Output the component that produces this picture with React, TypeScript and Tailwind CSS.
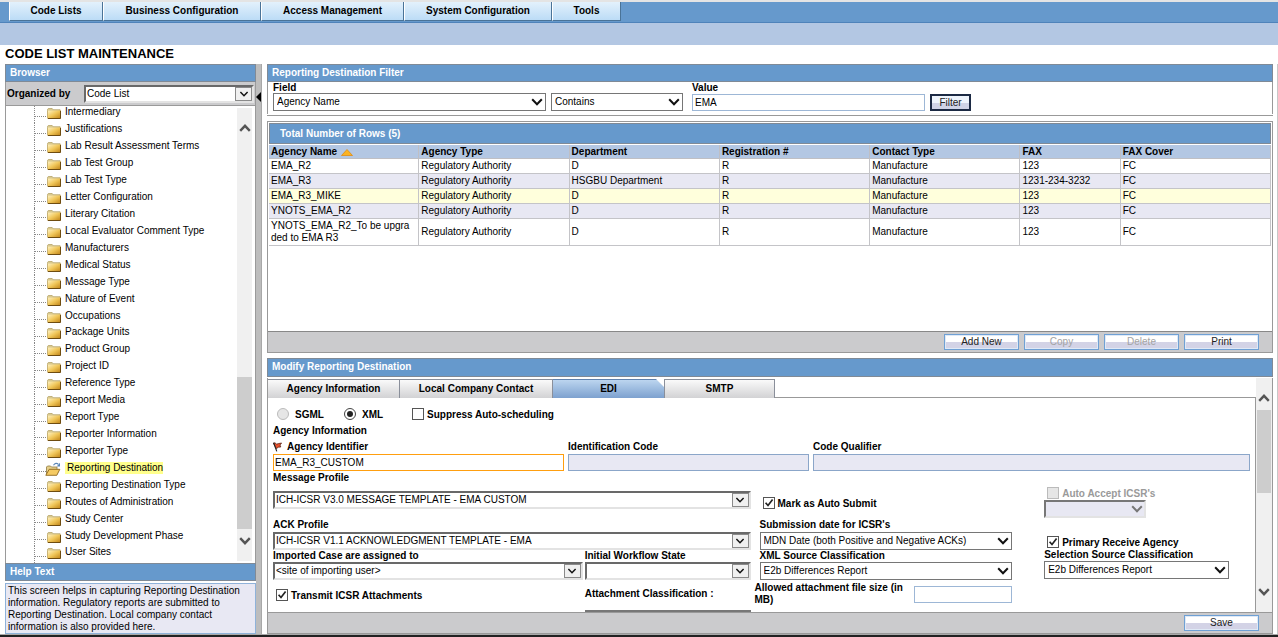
import React from 'react';
import clsx from 'clsx';

const menuItems = [
  { label: 'Code Lists', width: 'w-[94px]' },
  { label: 'Business Configuration', width: 'w-[158px]' },
  { label: 'Access Management', width: 'w-[143px]' },
  { label: 'System Configuration', width: 'w-[148px]' },
  { label: 'Tools', width: 'w-[69px]' },
];

const codeLists = [
  'Intermediary',
  'Justifications',
  'Lab Result Assessment Terms',
  'Lab Test Group',
  'Lab Test Type',
  'Letter Configuration',
  'Literary Citation',
  'Local Evaluator Comment Type',
  'Manufacturers',
  'Medical Status',
  'Message Type',
  'Nature of Event',
  'Occupations',
  'Package Units',
  'Product Group',
  'Project ID',
  'Reference Type',
  'Report Media',
  'Report Type',
  'Reporter Information',
  'Reporter Type',
  'Reporting Destination',
  'Reporting Destination Type',
  'Routes of Administration',
  'Study Center',
  'Study Development Phase',
  'User Sites',
];

const columns = [
  { label: 'Agency Name', width: 'w-[15%]' },
  { label: 'Agency Type', width: 'w-[15%]' },
  { label: 'Department', width: 'w-[15%]' },
  { label: 'Registration #', width: 'w-[15%]' },
  { label: 'Contact Type', width: 'w-[15%]' },
  { label: 'FAX', width: 'w-[10%]' },
  { label: 'FAX Cover', width: 'w-[15%]' },
];

const rows = [
  { tone: 'bg-white h-[15px]', cells: ['EMA_R2', 'Regulatory Authority', 'D', 'R', 'Manufacture', '123', 'FC'] },
  { tone: 'bg-[#e8e8f3] h-[15px]', cells: ['EMA_R3', 'Regulatory Authority', 'HSGBU Department', 'R', 'Manufacture', '1231-234-3232', 'FC'] },
  { tone: 'bg-[#ffffdc] h-[15px]', cells: ['EMA_R3_MIKE', 'Regulatory Authority', 'D', 'R', 'Manufacture', '123', 'FC'] },
  { tone: 'bg-[#e8e8f3] h-[15px]', cells: ['YNOTS_EMA_R2', 'Regulatory Authority', 'D', 'R', 'Manufacture', '123', 'FC'] },
  { tone: 'bg-white h-[27px]', cells: ['YNOTS_EMA_R2_To be upgra\nded to EMA R3', 'Regulatory Authority', 'D', 'R', 'Manufacture', '123', 'FC'] },
];

function Chevron({ className = '', up = false, bold = false }: { className?: string; up?: boolean; bold?: boolean }) {
  return (
    <svg viewBox="0 0 12 8" className={clsx('h-2 w-3 shrink-0', className)} fill="none" stroke="currentColor" strokeWidth={bold ? 2.4 : 2}>
      <path d={up ? 'M1.2 6.8 6 1.8l4.8 5' : 'M1.2 1.2 6 6.2l4.8-5'} />
    </svg>
  );
}

function FolderIcon() {
  return (
    <svg viewBox="0 0 14 11" className="h-[11px] w-[14px] shrink-0">
      <defs>
        <linearGradient id="folder" x1="0" y1="0" x2="1" y2="1">
          <stop offset="0" stopColor="#fff3c4" />
          <stop offset="0.5" stopColor="#f0c659" />
          <stop offset="1" stopColor="#c08316" />
        </linearGradient>
      </defs>
      <path d="M.5 9.5V1.3L1.3.5h3.9l1 1.2h6.9v1.6H.5" fill="#d9c98f" stroke="#a8924f" strokeWidth=".6" />
      <path d="M.5 2.4h13v8.1H.9L.5 10z" fill="url(#folder)" />
      <path d="M.5 2.8v7.3" stroke="#b99f5c" strokeWidth=".6" />
      <path d="M.8 10.5h12.7V2.8" fill="none" stroke="#6e4c10" strokeWidth="1" />
    </svg>
  );
}

function OpenFolderIcon() {
  return (
    <svg viewBox="0 0 16 14" className="-ml-px h-[14px] w-4 shrink-0">
      <path d="M1.5 12.5V5l1-1h3l1 1h5.5v3" fill="#e6cf88" stroke="#8f7a42" strokeWidth=".8" />
      <path d="M.8 13.3 4.2 7.3h10.6l-3 6z" fill="#f5ca62" stroke="#8d661d" strokeWidth=".9" />
      <path d="M8.5 3.2C9.8 1 12 .8 13.4 2.4" fill="none" stroke="#5b87b8" strokeWidth="1.1" />
      <path d="M15 .8v3.6h-3.3z" fill="#5b87b8" />
    </svg>
  );
}

function FlagIcon() {
  return (
    <svg viewBox="0 0 9 10" className="h-[10px] w-[9px] shrink-0">
      <path d="M.4 1.2 2.2.8l1.2 1.4 2-.6L8.6 1 7 3l.8 2-2.4.2-2 1.4z" fill="#e8502c" stroke="#4a1a10" strokeWidth=".7" />
      <path d="M.6.8 3.8 9.4" stroke="#222" strokeWidth="1.1" />
    </svg>
  );
}

type SelectProps = {
  label: string;
  value: string;
  variant?: 'flat' | 'combo' | 'disabled';
  id?: string;
  className?: string;
};

function SelectBox({ label, value, variant = 'flat', id, className }: SelectProps) {
  const combo = variant === 'combo';
  const disabled = variant === 'disabled';
  return (
    <div className={clsx('relative h-[18px] min-w-0', className)}>
      <select
        id={id}
        aria-label={id ? undefined : label}
        disabled={disabled}
        className={clsx(
          'block h-full w-full appearance-none text-[10px] leading-3 text-black',
          !combo && !disabled && 'border border-[#767676] bg-white pl-[3px]',
          combo && 'border-2 border-t-[#696969] border-r-[#e3e3e3] border-b-[#e3e3e3] border-l-[#696969] bg-white pl-px',
          disabled && 'border-2 border-t-[#777] border-r-[#e3e3e3] border-b-[#e3e3e3] border-l-[#777] bg-[#e8e8f3]',
        )}
      >
        <option>{value}</option>
      </select>
      <span
        className={clsx(
          'pointer-events-none absolute flex items-center justify-center',
          combo && 'inset-y-[2px] right-[2px] w-[17px] border border-[#8a8a8a] bg-[#f0f0f0]',
          !combo && 'inset-y-0 right-[3px] w-3',
          disabled ? 'text-[#777]' : 'text-[#111]',
        )}
      >
        <Chevron className={combo ? 'scale-75' : ''} />
      </span>
    </div>
  );
}

function Check({ label, checked, disabled }: { label: string; checked?: boolean; disabled?: boolean }) {
  return (
    <label className={clsx('flex items-center gap-[3px] font-bold', disabled && 'text-[#9a9a9a]')}>
      <span className="relative block size-3 shrink-0">
        <input
          type="checkbox"
          defaultChecked={checked}
          disabled={disabled}
          className={clsx('peer block size-3 appearance-none border', disabled ? 'border-[#bbb] bg-[#e6e6e6]' : 'border-[#555] bg-white')}
        />
        <svg viewBox="0 0 12 12" className="pointer-events-none absolute inset-0 hidden peer-checked:block" fill="none" stroke="#222" strokeWidth="1.7">
          <path d="m2.6 5.8 2.4 2.7L9.6 2.6" />
        </svg>
      </span>
      <span className="pt-[3px]">{label}</span>
    </label>
  );
}

function Radio({ label, checked, disabled }: { label: string; checked?: boolean; disabled?: boolean }) {
  return (
    <label className="flex items-center gap-[6px] font-bold">
      <span className="relative block size-3 shrink-0">
        <input
          type="radio"
          name="format"
          defaultChecked={checked}
          disabled={disabled}
          className={clsx('peer block size-3 appearance-none rounded-full border', disabled ? 'border-[#bbb] bg-[#e6e6e6]' : 'border-[#444] bg-white')}
        />
        <span className="pointer-events-none absolute inset-[3px] hidden rounded-full bg-[#222] peer-checked:block" />
      </span>
      <span className="pt-[3px]">{label}</span>
    </label>
  );
}

function ActionButton({ children, disabled }: { children: React.ReactNode; disabled?: boolean }) {
  return (
    <button
      type="button"
      disabled={disabled}
      className="h-4 w-[75px] border border-[#6fa0d4] bg-linear-to-b from-white from-50% to-[#d3d3e6] to-50% text-[10px] leading-3 text-[#222] shadow-[inset_0_0_0_1px_#dfe9f6] disabled:text-[#a3a3a3]"
    >
      {children}
    </button>
  );
}

function PanelHeader({ children, className }: { children: React.ReactNode; className?: string }) {
  return (
    <h2 className={clsx('flex h-[18px] shrink-0 items-center border border-[#808a96] bg-[#6699cc] px-1 pb-px font-bold text-white', className)}>
      {children}
    </h2>
  );
}

function Browser() {
  return (
    <aside className="flex w-[251px] shrink-0 flex-col">
      <PanelHeader>Browser</PanelHeader>
      <div className="flex h-6 shrink-0 items-center border-x border-b border-[#9a9a9a] bg-[#cbcbcd] px-px">
        <label htmlFor="organized" className="w-[77px] shrink-0 font-bold">Organized by</label>
        <SelectBox id="organized" label="Organized by" value="Code List" variant="combo" className="flex-1" />
      </div>
      <div className="flex min-h-0 flex-1 border-x border-[#9a9a9a] bg-white pr-[3px] pl-7">
        <ul className="flex min-h-0 flex-1 flex-col">
          {codeLists.map((name) => {
            const active = name === 'Reporting Destination';
            return (
              <li key={name} className="flex min-h-0 flex-1 items-center border-l border-dotted border-[#888] pb-1">
                <span className="mt-2 w-[11px] shrink-0 border-b border-dotted border-[#888]" />
                <a href="#" className="flex items-center gap-1 whitespace-nowrap">
                  <span className="flex w-[15px] justify-end pt-[3px]">{active ? <OpenFolderIcon /> : <FolderIcon />}</span>
                  <span className={clsx(active && 'bg-[#ffff8c] pl-[2px]')}>{name}</span>
                </a>
              </li>
            );
          })}
        </ul>
        <div className="my-[2px] flex w-[15px] flex-col items-center bg-[#f0f0f0] text-[#555]">
          <div className="flex h-8 shrink-0 items-end pb-2"><Chevron up bold /></div>
          <div className="flex-[236]" />
          <div className="w-full flex-[152] bg-[#cdcdcd]" />
          <div className="flex h-8 shrink-0 items-start pt-2"><Chevron bold /></div>
        </div>
      </div>
      <PanelHeader>Help Text</PanelHeader>
      <div className="mt-[2px] border border-[#8fb2d9] bg-[#e8e8f3] px-[2px] pt-px leading-3">
        This screen helps in capturing Reporting Destination information. Regulatory reports are submitted to
        Reporting Destination. Local company contact information is also provided here.
      </div>
    </aside>
  );
}

function FilterPanel() {
  return (
    <section className="shrink-0 border-b border-[#999] pb-px">
      <PanelHeader>Reporting Destination Filter</PanelHeader>
      <div className="flex h-8 items-end gap-[5px] border-x border-[#999] px-[5px] pb-[3px] leading-3">
        <div className="w-[273px]">
          <label htmlFor="field" className="block h-[11px] font-bold">Field</label>
          <SelectBox id="field" label="Field" value="Agency Name" />
        </div>
        <SelectBox label="Operator" value="Contains" className="w-[132px]" />
        <div className="ml-1 w-[233px]">
          <label htmlFor="value" className="block h-[12px] font-bold">Value</label>
          <input id="value" defaultValue="EMA" className="block h-[17px] w-full border border-[#9db7d6] bg-white px-[2px] text-[10px]" />
        </div>
        <button type="button" className="h-[17px] w-[41px] border-2 border-[#1c2a44] bg-linear-to-b from-[#eef4fc] from-50% to-[#cfd3e6] to-50% text-[10px] leading-3 text-[#222]">
          Filter
        </button>
      </div>
    </section>
  );
}

function ResultsPanel() {
  return (
    <section className="flex min-h-0 flex-[231] flex-col border border-[#999] bg-white">
      <div className="min-h-0 flex-1 px-px pt-px">
        <h2 className="mb-px flex h-[21px] items-center border border-[#808a96] bg-[#6699cc] px-[10px] font-bold text-white">
          Total Number of Rows (5)
        </h2>
        <table className="w-full table-fixed border-separate border-spacing-0 leading-3">
          <thead>
            <tr className="h-[14px] bg-[#b3c7e3] text-left">
              {columns.map((column, index) => (
                <th key={column.label} className={clsx('h-[14px] border-r border-b border-[#bfbfc4] py-0 pl-[2px] font-bold', column.width)}>
                  {column.label}
                  {index === 0 && (
                    <svg viewBox="0 0 12 7" className="ml-1 inline-block h-[7px] w-3 align-[-1px]">
                      <path d="M6 .5 11.5 6.5H.5z" fill="#fbb322" stroke="#e08b12" strokeWidth=".8" />
                    </svg>
                  )}
                </th>
              ))}
            </tr>
          </thead>
          <tbody>
            {rows.map((row) => (
              <tr key={row.cells[0]} className={row.tone}>
                {row.cells.map((cell, index) => (
                  <td key={index} className="overflow-hidden border-r border-b border-[#c4c4c8] py-0 pl-[2px] whitespace-pre">{cell}</td>
                ))}
              </tr>
            ))}
          </tbody>
        </table>
      </div>
      <div className="flex h-[21px] shrink-0 items-center justify-end gap-[5px] border-t border-[#888] bg-[#cbcbcd] pr-[13px]">
        <ActionButton>Add New</ActionButton>
        <ActionButton disabled>Copy</ActionButton>
        <ActionButton disabled>Delete</ActionButton>
        <ActionButton>Print</ActionButton>
      </div>
    </section>
  );
}

function Tabs() {
  const base = 'h-[19px] border-t border-r border-[#8a8f9a] pb-px font-bold';
  const plain = 'bg-linear-to-b from-[#fafafa] to-[#d2d2d4]';
  return (
    <div role="tablist" className="flex h-5 shrink-0 border-b border-[#999] pt-px">
      <button type="button" role="tab" className={clsx(base, plain, 'w-[132px]')}>Agency Information</button>
      <button type="button" role="tab" className={clsx(base, plain, 'w-[153px]')}>Local Company Contact</button>
      <button
        type="button"
        role="tab"
        aria-selected="true"
        className="h-[19px] w-[111px] border-t border-[#5f81ad] bg-linear-to-b from-[#bcd5ef] to-[#7da1cf] pb-px font-bold [clip-path:polygon(0_0,103px_0,111px_8px,111px_19px,0_19px)]"
      >
        EDI
      </button>
      <button type="button" role="tab" className={clsx(base, plain, 'w-[111px] border-l')}>SMTP</button>
    </div>
  );
}

const disabledInput = 'block h-[17px] w-full border border-[#8ba6c9] bg-[#e8e8f3] px-[2px] text-[10px]';

function EdiForm() {
  return (
    <form className="min-h-0 flex-1 overflow-hidden border-r border-[#999] px-[5px] pt-2 leading-3">
      <div className="flex h-[15px] items-center pl-1">
        <div className="w-[67px]"><Radio label="SGML" disabled /></div>
        <div className="w-[68px]"><Radio label="XML" checked /></div>
        <Check label="Suppress Auto-scheduling" />
      </div>
      <h3 className="mt-1 font-bold">Agency Information</h3>
      <div className="mt-1 grid grid-cols-[291fr_241fr_437fr] gap-x-1">
        <div>
          <label htmlFor="identifier" className="flex items-center gap-[5px] font-bold"><FlagIcon />Agency Identifier</label>
          <input id="identifier" defaultValue="EMA_R3_CUSTOM" className="mt-px block h-[17px] w-full border border-[#ff9f0f] bg-white px-px text-[10px]" />
        </div>
        <div>
          <label htmlFor="code" className="block font-bold">Identification Code</label>
          <input id="code" disabled className={clsx(disabledInput, 'mt-px')} />
        </div>
        <div>
          <label htmlFor="qualifier" className="block font-bold">Code Qualifier</label>
          <input id="qualifier" disabled className={clsx(disabledInput, 'mt-px')} />
        </div>
      </div>
      <div className="grid grid-cols-[478fr_276fr_206fr] gap-x-[9px]">
        <div>
          <label htmlFor="message" className="mt-px block font-bold">Message Profile</label>
          <SelectBox id="message" label="Message Profile" variant="combo" value="ICH-ICSR V3.0 MESSAGE TEMPLATE - EMA CUSTOM" className="mt-[7px]" />
          <label htmlFor="ack" className="mt-[10px] block font-bold">ACK Profile</label>
          <SelectBox id="ack" label="ACK Profile" variant="combo" value="ICH-ICSR V1.1 ACKNOWLEDGMENT TEMPLATE - EMA" className="mt-px" />
          <div className="grid grid-cols-[310fr_166fr] gap-x-[2px]">
            <div>
              <label htmlFor="assigned" className="block font-bold">Imported Case are assigned to</label>
              <SelectBox id="assigned" label="Imported Case are assigned to" variant="combo" value="<site of importing user>" />
              <div className="mt-[7px] ml-[3px]"><Check label="Transmit ICSR Attachments" checked /></div>
            </div>
            <div>
              <label htmlFor="workflow" className="block font-bold">Initial Workflow State</label>
              <SelectBox id="workflow" label="Initial Workflow State" variant="combo" value="" />
              <label htmlFor="attachment" className="mt-2 block font-bold">Attachment Classification :</label>
              <select id="attachment" multiple className="mt-[10px] block h-10 w-full border-2 border-[#777] bg-white text-[10px]">
                <option className="bg-[#55b4ea]">&nbsp;</option>
              </select>
            </div>
          </div>
        </div>
        <div className="pr-[23px]">
          <div className="mt-6 ml-[3px] h-6"><Check label="Mark as Auto Submit" checked /></div>
          <label htmlFor="submission" className="block font-bold">Submission date for ICSR's</label>
          <SelectBox id="submission" label="Submission date" value="MDN Date (both Positive and Negative ACKs)" className="mt-px" />
          <label htmlFor="xmlsource" className="block font-bold">XML Source Classification</label>
          <SelectBox id="xmlsource" label="XML Source Classification" value="E2b Differences Report" />
          <div className="mt-[2px] -ml-[5px] flex items-center gap-1">
            <label htmlFor="filesize" className="flex-1 font-bold">Allowed attachment file size (in MB)</label>
            <input id="filesize" className="block h-[17px] w-[98px] border border-[#9db7d6] bg-white px-[2px] text-[10px]" />
          </div>
        </div>
        <div>
          <div className="mt-[14px] ml-[3px] h-[15px]"><Check label="Auto Accept ICSR's" disabled /></div>
          <SelectBox label="Auto accept" variant="disabled" value="" className="w-[102px]" />
          <div className="mt-4 ml-[3px] h-[15px]"><Check label="Primary Receive Agency" checked /></div>
          <label htmlFor="selection" className="block font-bold">Selection Source Classification</label>
          <SelectBox id="selection" label="Selection Source Classification" value="E2b Differences Report" className="w-[185px]" />
        </div>
      </div>
    </form>
  );
}

function ModifyPanel() {
  return (
    <section className="flex min-h-0 flex-[277] flex-col">
      <PanelHeader className="h-[19px]">Modify Reporting Destination</PanelHeader>
      <div className="mt-px flex min-h-0 flex-1 border-x border-[#999]">
        <div className="flex min-h-0 min-w-0 flex-1 flex-col">
          <Tabs />
          <EdiForm />
        </div>
        <div className="flex w-4 shrink-0 flex-col items-center bg-[#f0f0f0] text-[#555]">
          <div className="flex h-8 shrink-0 items-end pb-2"><Chevron up bold /></div>
          <div className="w-[14px] flex-[82] bg-[#cdcdcd]" />
          <div className="flex-[90]" />
          <div className="flex h-7 shrink-0 items-start pt-1"><Chevron bold /></div>
        </div>
      </div>
      <div className="flex h-[22px] shrink-0 items-center justify-end border border-[#999] bg-[#cbcbcd] pr-[13px]">
        <ActionButton>Save</ActionButton>
      </div>
    </section>
  );
}

export default function App() {
  return (
    <div className="flex h-screen flex-col bg-white font-['Liberation_Sans',Arial,sans-serif] text-[10px] leading-3 text-black">
      <nav className="flex h-[23px] shrink-0 border-t-2 border-b border-t-[#e4e4e4] border-b-[#4f83ba] bg-[#6699cc] pl-[9px]">
        {menuItems.map((item) => (
          <a
            key={item.label}
            href="#"
            className={clsx('flex h-[19px] items-center justify-center border-r border-b border-l border-r-[#4a7397] border-b-[#4a7397] border-l-white bg-linear-to-b from-[#e3f1fc] to-[#bcdcf6] font-bold', item.width)}
          >
            {item.label}
          </a>
        ))}
      </nav>
      <div className="h-[22px] shrink-0 bg-[#b3c7e3]" />
      <h1 className="h-[19px] shrink-0 pt-px pl-[5px] text-[13px] leading-4 font-bold">CODE LIST MAINTENANCE</h1>
      <main className="flex min-h-0 flex-1 border-r border-[#c8c8c8] pr-1 pl-[5px]">
        <Browser />
        <div className="mr-[5px] flex w-[6px] shrink-0 flex-col border-r border-[#a8a8a8] bg-[#bdbdbd] pt-7">
          <button type="button" aria-label="Collapse browser" className="h-[10px] w-[5px]">
            <svg viewBox="0 0 5 10" className="block h-[10px] w-[5px]"><path d="M5 0v10L0 5z" /></svg>
          </button>
        </div>
        <div className="flex min-w-0 flex-1 flex-col gap-[5px]">
          <FilterPanel />
          <ResultsPanel />
          <ModifyPanel />
        </div>
      </main>
      <footer className="h-[3px] shrink-0 border-t border-[#aaa] bg-[#222]" />
    </div>
  );
}
